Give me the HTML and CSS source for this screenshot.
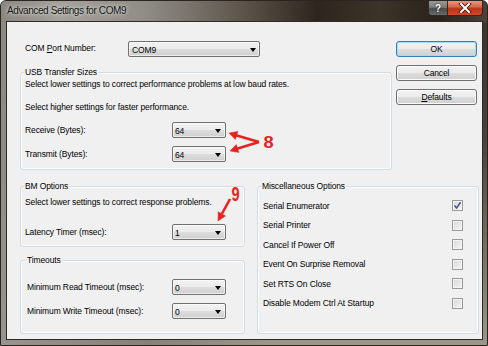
FILE: index.html
```html
<!DOCTYPE html>
<html>
<head>
<meta charset="utf-8">
<link rel="stylesheet" href="styles.css">
</head>
<body>
<div class="window">
  <div class="titlebar">
    <span class="title">Advanced Settings for COM9</span>
    <div class="caption-btns">
      <span class="cap-help">?</span>
      <span class="cap-close"><svg width="14" height="10" viewBox="0 0 14 10"><path d="M3 1 L11 9 M11 1 L3 9" stroke="#3a120a" stroke-width="3.6" stroke-linecap="square"/><path d="M3 1 L11 9 M11 1 L3 9" stroke="#fff" stroke-width="2" stroke-linecap="square"/></svg></span>
    </div>
  </div>
  <div class="client">
    <div class="top">
      <div class="left-col">
        <div class="com-row">
          <span class="com-lbl">COM <u>P</u>ort Number:</span>
          <div class="combo combo-wide"><span>COM9</span><i class="arrow"></i></div>
        </div>
        <fieldset class="group usb">
          <legend>USB Transfer Sizes</legend>
          <p class="note">Select lower settings to correct performance problems at low baud rates.</p>
          <p class="note note2">Select higher settings for faster performance.</p>
          <div class="row row-rx"><span class="lbl">Receive (Bytes):</span><div class="combo"><span>64</span><i class="arrow"></i></div></div>
          <div class="row row-tx"><span class="lbl">Transmit (Bytes):</span><div class="combo"><span>64</span><i class="arrow"></i></div></div>
        </fieldset>
      </div>
      <div class="buttons">
        <div class="btn btn-default">OK</div>
        <div class="btn">Cancel</div>
        <div class="btn"><u>D</u>efaults</div>
      </div>
    </div>
    <div class="bottom">
      <div class="bcol">
        <fieldset class="group bm">
          <legend>BM Options</legend>
          <p class="note bm-note">Select lower settings to correct response problems.</p>
          <div class="row row-lat"><span class="lbl">Latency Timer (msec):</span><div class="combo"><span>1</span><i class="arrow"></i></div></div>
        </fieldset>
        <fieldset class="group timeouts">
          <legend>Timeouts</legend>
          <div class="row row-rd"><span class="lbl lbl-t">Minimum Read Timeout (msec):</span><div class="combo"><span>0</span><i class="arrow"></i></div></div>
          <div class="row row-wr"><span class="lbl lbl-t">Minimum Write Timeout (msec):</span><div class="combo"><span>0</span><i class="arrow"></i></div></div>
        </fieldset>
      </div>
      <fieldset class="group misc">
        <legend>Miscellaneous Options</legend>
        <div class="opts">
          <div class="opt"><span>Serial Enumerator</span><span class="cb checked"><svg width="9" height="9" viewBox="0 0 9 9"><path d="M1.5 4.5 L3.6 7 L7.6 1.2" fill="none" stroke="#42588a" stroke-width="1.5"/></svg></span></div>
          <div class="opt"><span>Serial Printer</span><span class="cb"></span></div>
          <div class="opt"><span>Cancel If Power Off</span><span class="cb"></span></div>
          <div class="opt"><span>Event On Surprise Removal</span><span class="cb"></span></div>
          <div class="opt"><span>Set RTS On Close</span><span class="cb"></span></div>
          <div class="opt"><span>Disable Modem Ctrl At Startup</span><span class="cb"></span></div>
        </div>
      </fieldset>
    </div>
  </div>
  <svg class="annot" width="488" height="346" viewBox="0 0 488 346">
    <g fill="#e8221f" stroke="#e8221f">
      <line x1="259" y1="142" x2="236" y2="135.2" stroke-width="2.6"/>
      <line x1="259" y1="142" x2="237" y2="148.8" stroke-width="2.6"/>
      <polygon points="229,133 235.4,139.4 237.9,131.4" stroke-width="0.5"/>
      <polygon points="230,151 238.9,152.4 236.3,144.6" stroke-width="0.5"/>
      <line x1="230" y1="199" x2="221.8" y2="214" stroke-width="2.6"/>
      <polygon points="218,221 225.5,216 218.2,211.8" stroke-width="0.5"/>
      <text x="263.5" y="148" font-family="Liberation Sans, Arial, sans-serif" font-weight="bold" font-size="17" textLength="10" lengthAdjust="spacingAndGlyphs" stroke="none">8</text>
      <text x="231.5" y="201" font-family="Liberation Sans, Arial, sans-serif" font-weight="bold" font-size="19.5" textLength="8" lengthAdjust="spacingAndGlyphs" stroke="none">9</text>
    </g>
  </svg>
</div>
</body>
</html>
```

FILE: styles.css
```css
* { box-sizing: border-box; }
html, body { margin: 0; padding: 0; }
body {
  width: 488px;
  height: 346px;
  overflow: hidden;
  background: #ffffff;
  font-family: "Liberation Sans", Arial, sans-serif;
  font-size: 8.5px;
  letter-spacing: -0.12px;
  color: #000;
}
.window {
  position: relative;
  width: 488px;
  height: 346px;
  border: 1px solid #2b2520;
  border-radius: 6px 6px 0 0;
  background:
    linear-gradient(90deg, rgba(150,148,143,0.9) 0%, rgba(120,116,110,0.6) 30%, rgba(40,32,24,0) 55%),
    linear-gradient(180deg, #3a3129 0%, #4a423a 40%, #7a7468 75%, #9c978b 100%);
  display: flex;
  flex-direction: column;
  padding: 0 5px 6px 6px;
}
.titlebar {
  height: 21px;
  margin-right: -5px;
  display: flex;
  justify-content: space-between;
  align-items: flex-start;
  background: linear-gradient(90deg, #8a8782 0%, #a4a29d 12%, #8f8b85 30%, #5c544a 50%, #2e261e 65%, #3c3329 78%, #2a221b 90%, #4a4239 100%);
  margin-left: -6px;
  padding-left: 6px;
  border-radius: 5px 5px 0 0;
}
.title {
  font-size: 10px;
  letter-spacing: -0.4px;
  line-height: 14px;
  padding-top: 3px;
  color: #111;
  text-shadow: 0 0 5px rgba(235,235,230,0.9), 0 0 2px rgba(235,235,230,0.8);
}
.caption-btns {
  display: flex;
  margin-right: 4px;
}
.cap-help, .cap-close {
  height: 15px;
  display: flex;
  align-items: center;
  justify-content: center;
  border: 1px solid #2c2a28;
  border-top: none;
}
.cap-help {
  width: 19px;
  border-radius: 0 0 0 4px;
  background: linear-gradient(180deg, #9a9a98 0%, #7a7a78 45%, #4c4c4a 55%, #6a6a68 100%);
  color: #fff;
  font-weight: bold;
  font-size: 10px;
  text-shadow: 0 0 2px #000;
  border-right: none;
}
.cap-close {
  width: 36px;
  border-radius: 0 0 4px 0;
  background: linear-gradient(180deg, #e59680 0%, #d46a50 40%, #c0321a 55%, #d04a28 100%);
}
.client {
  flex: 1;
  background: #f0f0f0;
  box-shadow: 0 0 0 1px #2f2a25;
  padding: 19px 5px 5px 13px;
  display: flex;
  flex-direction: column;
}
.top {
  display: flex;
  align-items: flex-start;
}
.left-col {
  width: 372px;
  display: flex;
  flex-direction: column;
}
.com-row {
  display: flex;
  align-items: center;
  height: 16px;
}
.com-lbl {
  width: 108px;
  padding-left: 5px;
  margin-top: -3px;
}
.combo {
  position: relative;
  width: 54px;
  height: 16px;
  border: 1px solid #707070;
  border-radius: 2px;
  background: linear-gradient(180deg, #f2f2f2 0%, #ebebeb 48%, #dddddd 52%, #cfcfcf 100%);
  box-shadow: inset 0 0 0 1px rgba(255,255,255,0.6);
  display: flex;
  align-items: center;
  padding-left: 2px;
  padding-top: 1px;
}
.combo-wide {
  width: 132px;
  padding-left: 3px;
}
.arrow {
  position: absolute;
  right: 4px;
  top: 6px;
  width: 0;
  height: 0;
  border-left: 3.5px solid transparent;
  border-right: 3.5px solid transparent;
  border-top: 4px solid #000;
}
.combo-wide .arrow { right: 3px; }
.group {
  margin: 0;
  padding: 0 0 0 4px;
  min-width: 0;
  border: 1px solid #d3dce2;
  border-radius: 3px;
  box-shadow: inset 0 0 0 1px #fafbfc;
}
.group legend {
  padding: 0 1px;
  margin-left: -1px;
  line-height: 12px;
  height: 12px;
}
.note {
  margin: 0;
  line-height: 12px;
}
.usb {
  margin-top: 9px;
  padding-bottom: 7px;
}
.note2 { margin-top: 11px; }
.row {
  display: flex;
  align-items: center;
  height: 16px;
}
.lbl {
  width: 147px;
}
.row-rx { margin-top: 9px; }
.row-tx { margin-top: 8px; }
.buttons {
  margin-left: 4px;
  width: 81px;
  display: flex;
  flex-direction: column;
  gap: 8px;
}
.btn {
  height: 16px;
  border: 1px solid #707070;
  border-radius: 3px;
  background: linear-gradient(180deg, #f2f2f2 0%, #ebebeb 48%, #dddddd 52%, #cfcfcf 100%);
  box-shadow: inset 0 0 0 1px #fbfbfb;
  display: flex;
  align-items: center;
  justify-content: center;
  line-height: 12px;
}
.btn-default {
  border-color: #3c7fb1;
  box-shadow: inset 0 0 0 1px #9fdcf6;
}
.bottom {
  margin-top: 10px;
  margin-right: -2px;
  display: grid;
  grid-template-columns: 225px 222px;
  column-gap: 12px;
}
.bcol {
  display: flex;
  flex-direction: column;
}
.bm { padding-bottom: 6px; }
.bm-note { margin-top: 4px; }
.row-lat { margin-top: 16px; }
.timeouts {
  margin-top: 7px;
  padding-left: 6px;
  padding-bottom: 14px;
}
.lbl-t { width: 145px; }
.row-rd { margin-top: 13px; }
.row-wr { margin-top: 8px; }
.misc {
  padding-left: 5px;
}
.misc legend { margin-left: -2px; }
.opts {
  margin-top: 4px;
  display: grid;
  grid-auto-rows: 19.5px;
}
.opt {
  display: flex;
  align-items: center;
  justify-content: space-between;
  padding-right: 15px;
}
.cb {
  width: 11px;
  height: 11px;
  border: 1px solid #9a9a9a;
  background: linear-gradient(135deg, #d6d6d6 0%, #f6f6f6 100%);
  box-shadow: inset 0 0 0 1px #f4f4f4;
  display: flex;
  align-items: center;
  justify-content: center;
}
.annot {
  position: absolute;
  left: -1px;
  top: -1px;
  pointer-events: none;
}
```
